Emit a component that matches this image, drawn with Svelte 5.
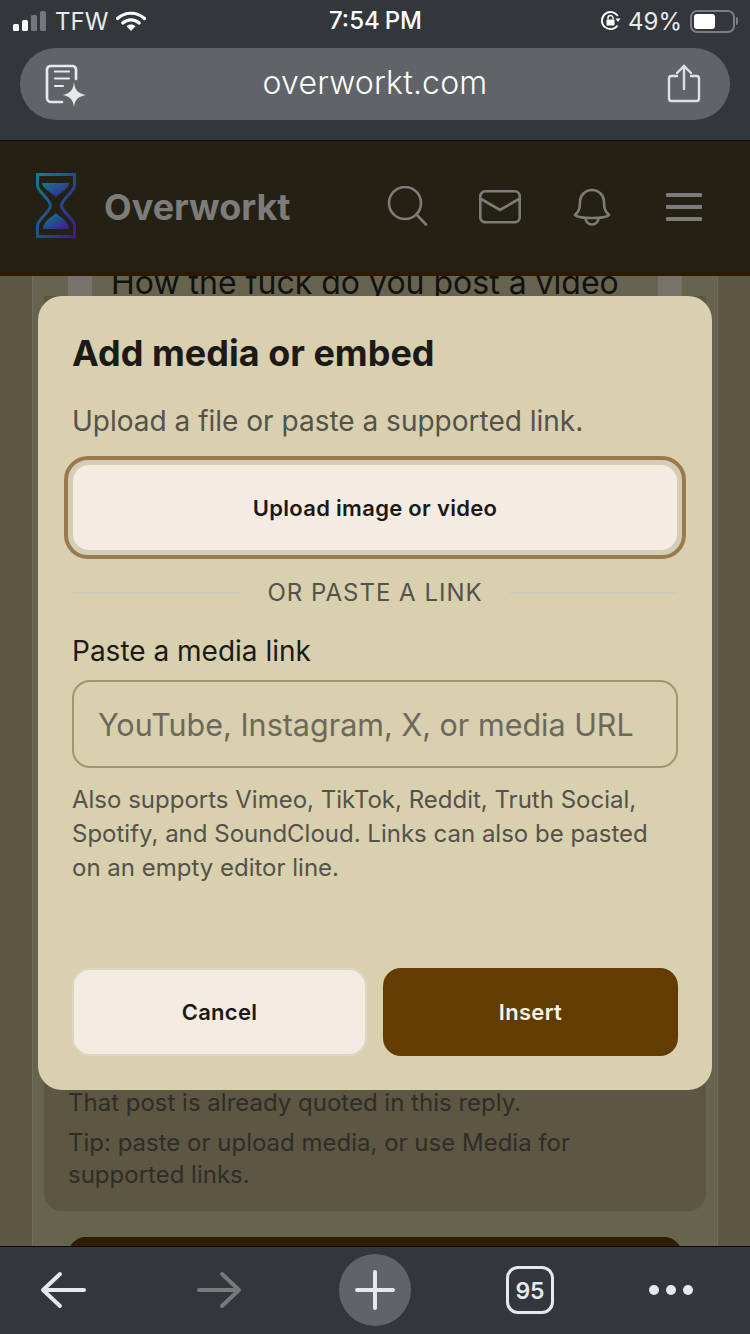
<script>
  const navIconStroke = '#7c7c7a';
</script>

<div class="phone">
  <div class="chrome">
    <div class="status">
      <div class="status-left">
        <span class="bars"><i class="on b1"></i><i class="on b2"></i><i class="b3"></i><i class="b4"></i></span>
        <span class="carrier">TFW</span>
        <svg class="wifi" width="30" height="22" viewBox="0 0 30 22">
          <path d="M1.500 8.500C9 1.500 21 1.500 28.500 8.500" fill="none" stroke="#fff" stroke-width="3.200" stroke-linecap="round"/>
          <path d="M6.800 13C11.500 8.800 18.500 8.800 23.200 13" fill="none" stroke="#fff" stroke-width="3.200" stroke-linecap="round"/>
          <path d="M10.500 16.200C13 14 17 14 19.500 16.200L15 21z" fill="#fff"/>
        </svg>
      </div>
      <div class="clock">7:54<span class="pm">PM</span></div>
      <div class="status-right">
        <svg class="lock" width="22" height="22" viewBox="0 0 22 22">
          <path d="M17.600 15.500A8.600 8.600 0 1 1 17.800 6" fill="none" stroke="#fff" stroke-width="1.800"/>
          <path d="M15.500 8.500h5l-2.500 3.500z" fill="#fff"/>
          <rect x="6.500" y="9.500" width="8" height="6" rx="1" fill="#fff"/>
          <path d="M8 9.500V8a2.500 2.500 0 0 1 5 0v1.500" fill="none" stroke="#fff" stroke-width="1.400"/>
        </svg>
        <span class="pct">49%</span>
        <span class="battery"><i></i></span>
        <span class="nub"></span>
      </div>
    </div>
    <div class="urlbar">
      <svg class="reader" width="44" height="44" viewBox="0 0 44 44">
        <path d="M17 38H6A4 4 0 0 1 2 34V5A4 4 0 0 1 6 2h21A4 4 0 0 1 31 5V15" fill="none" stroke="#e6e8ea" stroke-width="2.700" stroke-linecap="round"/>
        <path d="M10 7.500h14M10 14.500h14M10 22h8" fill="none" stroke="#e6e8ea" stroke-width="2.200" stroke-linecap="round"/>
        <path d="M29 18C30 26 32 29 41 31 32 33 30 36 29 43 28 36 26 33 18 31 26 29 28 26 29 18z" fill="#e6e8ea"/>
      </svg>
      <span class="host">overworkt.com</span>
      <svg class="share" width="34" height="40" viewBox="0 0 34 40">
        <path d="M11 12H4.500A2.500 2.500 0 0 0 2 14.500v20A2.500 2.500 0 0 0 4.500 37h25a2.500 2.500 0 0 0 2.500-2.500v-20A2.500 2.500 0 0 0 29.500 12H23" fill="none" stroke="#dfe1e3" stroke-width="2.400"/>
        <path d="M17 25V2.500M10 9l7-7 7 7" fill="none" stroke="#dfe1e3" stroke-width="2.400" stroke-linecap="round"/>
      </svg>
    </div>
  </div>

  <header class="site">
    <div class="brand">
      <svg class="logo" width="40" height="65" viewBox="0 0 40 65">
        <defs>
          <linearGradient id="hg" x1="0" y1="0" x2="1" y2="1">
            <stop offset="0" stop-color="#0f7f8c"/>
            <stop offset="1" stop-color="#3d1a8f"/>
          </linearGradient>
        </defs>
        <path d="M1.500 1.500h37v11c0 6-13 14-13 20s13 14 13 20v11h-37v-11c0-6 13-14 13-20S1.500 18.500 1.500 12.500z" fill="none" stroke="url(#hg)" stroke-width="3"/>
        <path d="M6 10h27c0 6-9 10-13 14C16 20 7 16 6 10z" fill="url(#hg)"/>
        <path d="M20 40c4 4 13 8 13 16H7c0-8 9-12 13-16z" fill="url(#hg)"/>
      </svg>
      <span class="name">Overworkt</span>
    </div>
    <nav class="icons">
      <svg width="42" height="42" viewBox="0 0 42 42">
        <circle cx="18" cy="17" r="16" fill="none" stroke={navIconStroke} stroke-width="2.600"/>
        <path d="M29.500 28.500L39 38.500" fill="none" stroke={navIconStroke} stroke-width="2.600" stroke-linecap="round"/>
      </svg>
      <svg width="42" height="34" viewBox="0 0 42 34">
        <rect x="1.300" y="1.300" width="39.400" height="31" rx="5" fill="none" stroke={navIconStroke} stroke-width="2.600"/>
        <path d="M2 9l19 11 19-11" fill="none" stroke={navIconStroke} stroke-width="2.600"/>
      </svg>
      <svg class="bell" width="38" height="40" viewBox="0 0 38 40">
        <path d="M2 28c3-3 5-5 5-13a12 12 0 0 1 24 0c0 8 2 10 5 13-2 2-11 3-17 3S4 30 2 28z" fill="none" stroke={navIconStroke} stroke-width="2.600" stroke-linejoin="round"/>
        <path d="M12.500 31a6.500 6.500 0 0 0 13 0" fill="none" stroke={navIconStroke} stroke-width="2.600"/>
      </svg>
      <span class="burger"><i></i><i></i><i></i></span>
    </nav>
  </header>

  <main class="page">
    <div class="post-card">
      <div class="post-head">
        <span class="quote-rule"></span>
        <span class="post-title">How the fuck do you post a video</span>
        <span class="quote-rule end"></span>
      </div>
      <div class="hints">
        <p>That post is already quoted in this reply.</p>
        <p>Tip: paste or upload media, or use Media for supported links.</p>
      </div>
      <div class="submit"></div>
    </div>

    <div class="modal">
      <h2>Add media or embed</h2>
      <p class="sub">Upload a file or paste a supported link.</p>
      <div class="focus-ring">
        <button class="upload">Upload image or video</button>
      </div>
      <div class="divider"><span>OR PASTE A LINK</span></div>
      <label for="media-url">Paste a media link</label>
      <input id="media-url" placeholder="YouTube, Instagram, X, or media URL" />
      <p class="help">Also supports Vimeo, TikTok, Reddit, Truth Social, Spotify, and SoundCloud. Links can also be pasted on an empty editor line.</p>
      <div class="actions">
        <button class="cancel">Cancel</button>
        <button class="insert">Insert</button>
      </div>
    </div>
  </main>

  <footer class="toolbar">
    <svg width="48" height="38" viewBox="0 0 48 38">
      <path d="M45 19H4M21 3L4 19l17 16" fill="none" stroke="#e6e9eb" stroke-width="4" stroke-linecap="round" stroke-linejoin="round"/>
    </svg>
    <svg class="forward" width="48" height="38" viewBox="0 0 48 38">
      <path d="M5 19h40M28 3l17 16-17 16" fill="none" stroke="#77797b" stroke-width="4" stroke-linecap="round" stroke-linejoin="round"/>
    </svg>
    <div class="plus">
      <svg width="40" height="40" viewBox="0 0 40 40">
        <path d="M20 2v36M2 20h36" fill="none" stroke="#e6e9eb" stroke-width="4" stroke-linecap="round"/>
      </svg>
    </div>
    <div class="tabs">95</div>
    <div class="dots"><i></i><i></i><i></i></div>
  </footer>
</div>

<style>
  :global(body) {
    margin: 0;
    background: #33373b;
  }

  .phone {
    width: 750px;
    height: 1334px;
    display: flex;
    flex-direction: column;
    overflow: hidden;
    font-family: Inter, 'Liberation Sans', sans-serif;
  }

  .chrome {
    height: 140px;
    flex: none;
    box-sizing: border-box;
    background: #33373b;
    padding: 0 20px;
    display: flex;
    flex-direction: column;
  }

  .status {
    height: 48px;
    flex: none;
    display: flex;
    justify-content: space-between;
    align-items: center;
    position: relative;
    color: #fff;
    font-size: 24px;
    padding-bottom: 6px;
    box-sizing: border-box;
    margin: 0 -8px 0 -7px;
  }

  .status-left,
  .status-right {
    display: flex;
    align-items: center;
  }

  .bars {
    display: flex;
    align-items: flex-end;
    gap: 3px;
    height: 20px;
  }

  .bars i {
    width: 6px;
    background: #75787b;
    border-radius: 1.500px;
  }

  .bars .on {
    background: #fff;
  }

  .b1 { height: 7px; }
  .b2 { height: 11px; }
  .b3 { height: 16px; }
  .b4 { height: 20px; }

  .carrier {
    margin-left: 9px;
    color: #e8e9ea;
  }

  .wifi {
    margin-left: 8px;
  }

  .clock {
    position: absolute;
    top: 6px;
    left: 0;
    right: 0;
    line-height: 30px;
    text-align: center;
    font-weight: 500;
  }

  .pm {
    margin-left: 5px;
  }

  .lock {
    margin-right: 6px;
  }

  .pct {
    color: #e8e9ea;
    margin-right: 8px;
  }

  .battery {
    width: 45px;
    height: 23px;
    box-sizing: border-box;
    border: 2px solid #7b7d80;
    border-radius: 7px;
    padding: 2px;
    display: flex;
  }

  .battery i {
    width: 21px;
    background: #fff;
    border-radius: 3px;
  }

  .nub {
    width: 2px;
    height: 8px;
    margin-left: 1px;
    background: #7b7d80;
    border-radius: 0 2px 2px 0;
  }

  .urlbar {
    height: 72px;
    flex: none;
    border-radius: 36px;
    background: #606468;
    display: flex;
    align-items: center;
    justify-content: space-between;
    padding: 0 29px 0 25px;
    position: relative;
  }

  .reader {
    margin-top: 3px;
  }

  .host {
    position: absolute;
    left: 0;
    right: 0;
    top: 16px;
    line-height: 38px;
    text-align: center;
    color: #fff;
    font-size: 32px;
    font-weight: 300;
    letter-spacing: 0.2px;
  }

  .site {
    height: 136px;
    flex: none;
    box-sizing: border-box;
    background: #252014;
    border-top: 1px solid #0b0b0b;
    border-bottom: 4px solid #2a1a06;
    padding: 0 48px 0 36px;
    display: flex;
    align-items: center;
    justify-content: space-between;
  }

  .brand {
    display: flex;
    align-items: center;
    gap: 28px;
  }

  .logo {
    margin-top: -2px;
  }

  .name {
    font-size: 36px;
    font-weight: 700;
    color: #7c7c7a;
  }

  .icons {
    display: flex;
    align-items: center;
    gap: 50px;
  }

  .bell {
    margin-left: 2px;
  }

  .burger {
    width: 36px;
    margin-left: 5px;
    display: flex;
    flex-direction: column;
    gap: 8px;
  }

  .burger i {
    height: 4px;
    border-radius: 1px;
    background: #7c7c7a;
  }

  .page {
    flex: 1;
    position: relative;
    overflow: hidden;
    background: #5c5643;
  }

  .post-card {
    margin: 0 32px;
    height: 100%;
    box-sizing: border-box;
    background: #66634f;
    border-left: 1px solid #6f6d60;
    border-right: 1px solid #6f6d60;
    display: flex;
    flex-direction: column;
  }

  .post-head {
    display: flex;
    padding: 0 35px;
    height: 20px;
    overflow: hidden;
    flex: none;
  }

  .quote-rule {
    width: 24px;
    flex: none;
    background: #77736a;
  }

  .quote-rule.end {
    margin-left: auto;
  }

  .post-title {
    margin: -9px 0 0 19px;
    font-size: 32px;
    line-height: 32px;
    color: #111;
    white-space: nowrap;
  }

  .hints {
    margin: 0 11px;
    flex: none;
    height: 915px;
    box-sizing: border-box;
    background: #5c5643;
    border-radius: 0 0 18px 18px;
    padding: 791px 48px 0 24px;
    color: #2f2d27;
    font-size: 24px;
    line-height: 32px;
  }

  .hints p {
    margin: 0 0 8px;
  }

  .submit {
    margin: 26px 35px 0;
    height: 40px;
    flex: none;
    border-radius: 18px 18px 0 0;
    background: #2f1c05;
  }

  .modal {
    position: absolute;
    left: 38px;
    top: 20px;
    width: 674px;
    height: 794px;
    box-sizing: border-box;
    background: #d8d0ae;
    border-radius: 24px;
    padding: 34px;
    display: flex;
    flex-direction: column;
    color: #1c1a16;
  }

  h2 {
    margin: 0;
    font-size: 36px;
    line-height: 46px;
    font-weight: 700;
  }

  .sub {
    margin: 27px 0 0;
    font-size: 28px;
    line-height: 36px;
    color: #55524a;
  }

  .focus-ring {
    margin: 17px -8px 0;
    border: 4px solid #9a7a50;
    border-radius: 24px;
    padding: 5px;
    flex: none;
    background: #d5ceb6;
  }

  button {
    font-family: inherit;
    font-weight: 600;
    font-size: 22px;
    letter-spacing: 0.3px;
    cursor: pointer;
    box-sizing: border-box;
    color: #1c1a16;
  }

  .upload {
    width: 100%;
    height: 85px;
    display: block;
    background: #f4ece2;
    border: none;
    border-radius: 16px;
  }

  .divider {
    margin-top: 18px;
    display: flex;
    align-items: center;
    gap: 27px;
    font-size: 24px;
    line-height: 32px;
    letter-spacing: 1px;
    color: #55524a;
  }

  .divider::before,
  .divider::after {
    content: '';
    flex: 1;
    height: 2px;
    background: #d0cbb8;
  }

  label {
    margin-top: 24px;
    font-size: 28px;
    line-height: 36px;
  }

  input {
    margin-top: 11px;
    height: 88px;
    box-sizing: border-box;
    width: 100%;
    flex: none;
    background: transparent;
    border: 2px solid #a09670;
    border-radius: 18px;
    padding: 0 24px;
    font-family: inherit;
    font-size: 30.500px;
    color: #1c1a16;
    outline: none;
  }

  input::placeholder {
    color: #6c695c;
    opacity: 1;
  }

  .help {
    margin: 15px 0 0;
    font-size: 24px;
    line-height: 34px;
    color: #55524a;
  }

  .actions {
    margin-top: auto;
    display: grid;
    grid-template-columns: 1fr 1fr;
    gap: 16px;
  }

  .actions button {
    height: 88px;
    border-radius: 18px;
  }

  .cancel {
    background: #f4ece2;
    border: 2px solid #dcd6c4;
  }

  .insert {
    background: #623c03;
    border: none;
    color: #f8f2e6;
  }

  .toolbar {
    height: 88px;
    flex: none;
    box-sizing: border-box;
    background: #33373b;
    border-top: 1px solid #0b0b0b;
    display: flex;
    align-items: center;
    padding: 0 0 2px 39px;
  }

  .forward {
    margin-left: 107px;
  }

  .plus {
    margin-left: 97px;
    width: 72px;
    height: 72px;
    border-radius: 50%;
    background: #606468;
    display: flex;
    align-items: center;
    justify-content: center;
  }

  .tabs {
    margin-left: 95px;
    width: 48px;
    height: 48px;
    box-sizing: border-box;
    border: 3px solid #e6e9eb;
    border-radius: 12px;
    color: #e6e9eb;
    font-size: 23px;
    font-weight: 600;
    display: flex;
    align-items: center;
    justify-content: center;
    padding-top: 2px;
  }

  .dots {
    margin-left: 95px;
    display: flex;
    gap: 7px;
  }

  .dots i {
    width: 10px;
    height: 10px;
    border-radius: 50%;
    background: #e6e9eb;
  }
</style>
